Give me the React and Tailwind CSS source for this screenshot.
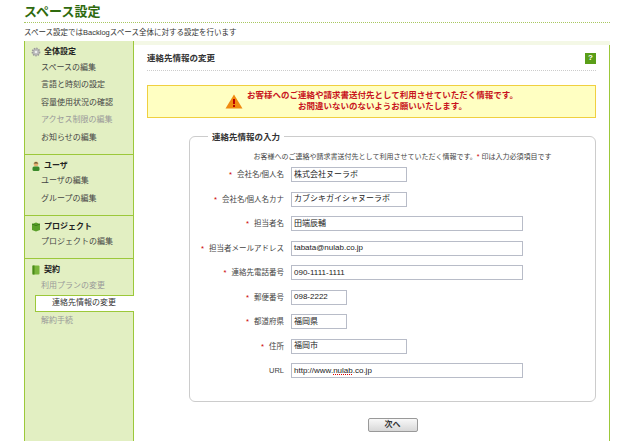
const sections = [
  { title: '全体設定', icon: 'gear', items: [['スペースの編集'], ['言語と時刻の設定'], ['容量使用状況の確認'], ['アクセス制限の編集', 'dim'], ['お知らせの編集']] },
  { title: 'ユーザ', icon: 'user', items: [['ユーザの編集'], ['グループの編集']] },
  { title: 'プロジェクト', icon: 'proj', items: [['プロジェクトの編集']] },
  { title: '契約', icon: 'book', items: [['利用プランの変更', 'dim'], ['連絡先情報の変更', 'active'], ['解約手続', 'dim']] },
];

const fields = [
  ['会社名/個人名', '株式会社ヌーラボ', 'w-[116px]', true],
  ['会社名/個人名カナ', 'カブシキガイシャヌーラボ', 'w-[116px]', true],
  ['担当者名', '田端辰輔', 'w-[232px]', true],
  ['担当者メールアドレス', 'tabata@nulab.co.jp', 'w-[232px]', true],
  ['連絡先電話番号', '090-1111-1111', 'w-[232px]', true],
  ['郵便番号', '098-2222', 'w-[56px]', true],
  ['都道府県', '福岡県', 'w-[56px]', true],
  ['住所', '福岡市', 'w-[116px]', true],
  ['URL', 'http://www.nulab.co.jp', 'w-[232px]', false],
];

function Icon({ kind }) {
  if (kind === 'gear')
    return (
      <svg width="10" height="10" viewBox="0 0 10 10">
        <circle cx="5" cy="5" r="3.6" fill="#bbb" stroke="#999" strokeWidth="1.6" strokeDasharray="1.4 1" />
        <circle cx="5" cy="5" r="1.3" fill="#eee" />
      </svg>
    );
  if (kind === 'user')
    return (
      <svg width="10" height="10" viewBox="0 0 10 10">
        <circle cx="5" cy="3" r="2.4" fill="#e8b070" />
        <path d="M2.6 2.6 Q5 -0.5 7.4 2.6" fill="#553" />
        <rect x="1.5" y="5.5" width="7" height="4.5" rx="1.5" fill="#3a8a2a" />
      </svg>
    );
  if (kind === 'proj')
    return (
      <svg width="10" height="10" viewBox="0 0 10 10">
        <path d="M1 2 L5 0.5 L9 2 L9 8 L5 9.5 L1 8 Z" fill="#5aa02a" />
        <path d="M1 2 L5 3.5 L9 2" fill="none" stroke="#3a7a1a" />
      </svg>
    );
  return (
    <svg width="10" height="10" viewBox="0 0 10 10">
      <rect x="1.5" y="0.5" width="7" height="9" rx="1" fill="#7ab53a" />
      <rect x="1.5" y="0.5" width="2" height="9" fill="#4a8a1a" />
    </svg>
  );
}

export default function App() {
  return (
    <div className="w-[625px] h-[441px] overflow-hidden bg-white text-[8px] text-[#333]" style={{ fontFamily: '"Liberation Sans", "Noto Sans CJK JP", sans-serif' }}>
      <div className="pl-[24px] pr-[15px] pt-[3px]">
        <div className="text-[13px] font-bold text-[#2f6a0e] leading-[18px]">スペース設定</div>
        <div className="border-b border-dotted border-[#a8c860] mb-[4px] mt-[1px]" />
        <div className="leading-[12px] mb-[2px] text-[7.5px]">スペース設定ではBacklogスペース全体に対する設定を行います</div>
        <div className="flex h-[400px] bg-[#f4f8e6]">
          <div className="w-[110px] bg-[#e2efc2] border-l border-r border-[#9cc83a] shrink-0">
            {sections.map((s, i) => (
              <div key={s.title} className={`pb-[7px] ${i > 0 ? 'border-t border-[#9cc83a]' : ''}`}>
                <div className="flex items-center gap-[3px] pl-[6px] h-[18px] pt-[4px] font-bold text-[#222]">
                  <Icon kind={s.icon} />
                  <span>{s.title}</span>
                </div>
                {s.items.map(([t, st]) => (
                  <div
                    key={t}
                    className={`h-[17.5px] flex items-center pl-[16px] ${
                      st === 'active'
                        ? 'bg-white border border-r-0 border-[#9cc83a] ml-[10px] mr-[-1px] pl-[5px] relative text-[#333]'
                        : st === 'dim'
                        ? 'text-[#999]'
                        : 'text-[#444]'
                    }`}
                  >
                    {t}
                  </div>
                ))}
              </div>
            ))}
          </div>
          <div className="flex-1 bg-white border-r border-[#9cc83a] mt-[4px] px-[13px] pt-[7px]">
            <div className="flex items-center justify-between border-b border-dotted border-[#ccc] pb-[5px]">
              <span className="font-bold text-[8.5px]">連絡先情報の変更</span>
              <span className="w-[11px] h-[11px] bg-[#5a9e18] text-white font-bold text-[8px] flex items-center justify-center">?</span>
            </div>
            <div className="mt-[14px] h-[33px] bg-[#ffffc2] border border-[#f0d040] flex items-center justify-center gap-[4px]">
              <svg width="18" height="15" viewBox="0 0 18 15">
                <path d="M9 0.5 L17.5 14.5 L0.5 14.5 Z" fill="#f08a10" />
                <rect x="8" y="5" width="2" height="5" fill="#b00" />
                <rect x="8" y="11" width="2" height="2" fill="#b00" />
              </svg>
              <div className="text-[#c8141e] font-bold text-[8.5px] leading-[11px] text-center">
                お客様へのご連絡や請求書送付先として利用させていただく情報です。<br />お間違いないのないようお願いいたします。
              </div>
            </div>
            <div className="ml-[42px] mt-[18px] relative border border-[#ccc] rounded-[6px] h-[266px] pt-[15px]">
              <div className="absolute -top-[6px] left-[18px] bg-white px-[4px] font-bold text-[8.5px]">連絡先情報の入力</div>
              <div className="text-center text-[7px] text-[#444] pl-[20px]">
                お客様へのご連絡や請求書送付先として利用させていただく情報です。<span className="text-[#c00]">*</span> 印は入力必須項目です
              </div>
              <div className="mt-[5px] flex flex-col gap-[9.5px]">
                {fields.map(([l, v, w, req]) => (
                  <div key={l} className="flex items-center">
                    <div className="w-[101px] text-right pr-[7px] text-[#444] whitespace-nowrap text-[7.5px]">
                      {req && <span className="text-[#c00] mr-[5px]">*</span>}
                      {l}
                    </div>
                    <div className={`${w} h-[15px] border border-[#b8bcc8] px-[2px] flex items-center text-[#222] bg-white shrink-0`}>
                      {l === 'URL' ? (
                        <span>http://www.<span className="underline decoration-dotted decoration-[#d00]">nulab</span>.co.jp</span>
                      ) : v}
                    </div>
                  </div>
                ))}
              </div>
            </div>
            <div className="flex justify-center mt-[16px] pl-[42px]">
              <div className="w-[50px] h-[14px] border border-[#999] rounded-[2px] bg-gradient-to-b from-[#f8f8f8] to-[#d8d8d8] flex items-center justify-center font-bold">次へ</div>
            </div>
          </div>
        </div>
      </div>
    </div>
  );
}
